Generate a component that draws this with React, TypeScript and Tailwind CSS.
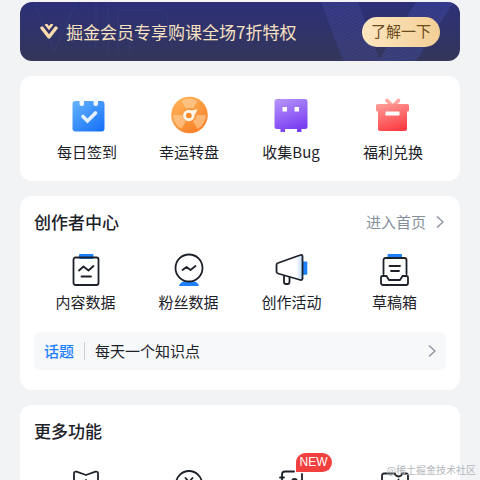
import React from 'react'
import type { ReactNode } from 'react'

const stroke = {
  fill: 'none',
  stroke: '#1d2129',
  strokeWidth: 1.8,
  strokeLinecap: 'round',
  strokeLinejoin: 'round',
} as const

type Item = { id: string; label?: string; icon: ReactNode; badge?: string }

const Svg = ({ children }: { children: ReactNode }) => (
  <svg viewBox="0 0 40 40" className="block size-10 overflow-visible" aria-hidden="true">
    {children}
  </svg>
)

const CalendarIcon = () => (
  <Svg>
    <defs>
      <linearGradient id="calendar" x1="0" y1="0" x2="0.8" y2="1">
        <stop offset="0" stopColor="#66b4ff" />
        <stop offset="1" stopColor="#1a73f8" />
      </linearGradient>
    </defs>
    <rect x="5.5" y="5" width="32" height="30.5" rx="3" fill="url(#calendar)" />
    <rect x="12.5" y="1" width="4.5" height="9" rx="2" fill="#f2f8ff" />
    <rect x="26.5" y="1" width="4.5" height="9" rx="2" fill="#f2f8ff" />
    <path d="M16 20.5l4.5 4.5 8-8" fill="none" stroke="#e4efff" strokeWidth="3.6" strokeLinecap="round" />
  </Svg>
)

const WheelIcon = () => (
  <Svg>
    <defs>
      <linearGradient id="wheel" x1="0" y1="0" x2="0.6" y2="1">
        <stop offset="0" stopColor="#ffb75c" />
        <stop offset="1" stopColor="#fa832a" />
      </linearGradient>
    </defs>
    <circle cx="20.5" cy="19" r="18.3" fill="url(#wheel)" />
    <path d="M20.5 19L12.5 5a16.2 16.2 0 0 1 16 0zM20.5 19H36.7a16.2 16.2 0 0 1-8.1 14zM20.5 19H4.3a16.2 16.2 0 0 0 8.1 14z" fill="#ffd9ab" opacity="0.55" />
    <circle cx="20.5" cy="19" r="7" fill="#fc9238" />
    <circle cx="19.8" cy="19.5" r="4.3" fill="none" stroke="#fff6ea" strokeWidth="3" />
    <path d="M21 15l7.5-2-2.5 6z" fill="#fff6ea" />
    <circle cx="19.8" cy="19.5" r="2.6" fill="#fa8b30" />
  </Svg>
)

const BugIcon = () => (
  <Svg>
    <defs>
      <linearGradient id="bug" x1="0.1" y1="0" x2="0.5" y2="1">
        <stop offset="0" stopColor="#b594fb" />
        <stop offset="1" stopColor="#7a3df2" />
      </linearGradient>
    </defs>
    <path d="M6 3h28a2.5 2.5 0 0 1 2.5 2.5v25A2.5 2.5 0 0 1 34 33h-3.5v3h-4.5v-3H14v3H9.5v-3H6a2.5 2.5 0 0 1-2.5-2.5v-25A2.5 2.5 0 0 1 6 3z" fill="url(#bug)" />
    <path d="M11.5 11H16v4.5h-4.5zM23.5 11H28v4.5h-4.5z" fill="#fff" />
  </Svg>
)

const GiftIcon = () => (
  <Svg>
    <defs>
      <linearGradient id="gift" x1="0.2" y1="0" x2="0.6" y2="1">
        <stop offset="0" stopColor="#ff9a94" />
        <stop offset="1" stopColor="#fc3d44" />
      </linearGradient>
    </defs>
    <path d="M14 4.5l4.5 4.5M25.5 4.5L21 9" stroke="#ffa39c" strokeWidth="3.6" strokeLinecap="round" />
    <path d="M4.5 8h30A1.5 1.5 0 0 1 36 9.5V14a1.5 1.5 0 0 1-1.5 1.5h-.5V33a2 2 0 0 1-2 2H7a2 2 0 0 1-2-2V15.5h-.5A1.5 1.5 0 0 1 3 14V9.500A1.5 1.5 0 0 1 4.5 8z" fill="url(#gift)" />
    <rect x="12.5" y="15.5" width="14" height="4" rx="0.5" fill="#fff" />
  </Svg>
)

const ContentIcon = () => (
  <Svg>
    <rect x="13" y="4" width="14.5" height="5" rx="1" fill="#1e80ff" />
    <g {...stroke}>
      <rect x="7.5" y="7.5" width="25" height="27.5" rx="2" />
      <path d="M13 20.5l4.5-4 5 4 5-4.5M15.5 26.5h9.5" />
    </g>
  </Svg>
)

const FansIcon = () => (
  <Svg>
    <path d="M10 36c.5-3 3-4.5 6-4.5h8c3 0 5.5 1.5 6 4.5z" fill="#1e80ff" />
    <circle cx="20" cy="18" r="13.5" {...stroke} fill="#fff" />
    <path d="M13.5 20l4-3 4 3 5-4" {...stroke} />
  </Svg>
)

const MegaphoneIcon = () => (
  <Svg>
    <defs>
      <linearGradient id="horn" x1="0" y1="0" x2="1" y2="0">
        <stop offset="0.75" stopColor="#fff" />
        <stop offset="1" stopColor="#bcdcff" />
      </linearGradient>
    </defs>
    <path d="M31 11.5h3.5a.8.8 0 0 1 .8.8V24a.8.8 0 0 1-.8.8H31z" fill="#1e80ff" />
    <path d="M12 25.5V32a2 2 0 0 0 2 2h1.5a2 2 0 0 0 2-2V27" {...stroke} />
    <path d="M6 13L28.5 5c1-.4 2 .2 2 1.3V28.5c0 1.2-1 1.8-2 1.5L6 23.5c-1-.3-1.5-1-1.5-2V15c0-1 .5-1.7 1.5-2z" {...stroke} fill="url(#horn)" />
  </Svg>
)

const DraftIcon = () => (
  <Svg>
    <rect x="12.5" y="4" width="14.5" height="5" rx="1" fill="#1e80ff" />
    <g {...stroke}>
      <path d="M8.5 24V10a2 2 0 0 1 2-2h19a2 2 0 0 1 2 2v14" />
      <path d="M14.5 16h10.5M16 21h8" />
      <path d="M7.5 26h4l2.5 4h11l2.5-4h4a1.5 1.5 0 0 1 1.5 1.5V33a2 2 0 0 1-2 2H8a2 2 0 0 1-2-2v-5.5A1.5 1.5 0 0 1 7.5 26z" />
    </g>
  </Svg>
)

const TicketIcon = () => (
  <Svg>
    <path d="M8 33V6.5C8 5 9 4.2 10.5 4.7L20 8l9.5-3.3c1.5-.5 2.5.3 2.5 1.8V33z" {...stroke} />
    <path d="M20 13v9M15.5 17.5h9" {...stroke} />
  </Svg>
)

const CoinIcon = () => (
  <Svg>
    <circle cx="20" cy="17" r="13" {...stroke} />
    <path d="M16.5 11l3.5 4 3.5-4M20 15v9M15.5 17.5h9" {...stroke} />
  </Svg>
)

const SignIcon = () => (
  <Svg>
    <path d="M10 34V7.5a3 3 0 0 1 3-3h9M30 7v27M8 10.5h4" {...stroke} />
    <circle cx="22.5" cy="14.5" r="2.5" {...stroke} />
  </Svg>
)

const CouponIcon = () => (
  <Svg>
    <path d="M7 33V8.5a2 2 0 0 1 2-2h11a3.5 3 0 0 0 7 0h4a2 2 0 0 1 2 2V33z" {...stroke} />
    <path d="M23.5 12.5v3M23.5 20v3" {...stroke} />
  </Svg>
)

const activities: Item[] = [
  { id: 'checkin', label: '每日签到', icon: <CalendarIcon /> },
  { id: 'wheel', label: '幸运转盘', icon: <WheelIcon /> },
  { id: 'bug', label: '收集Bug', icon: <BugIcon /> },
  { id: 'gift', label: '福利兑换', icon: <GiftIcon /> },
]

const creator: Item[] = [
  { id: 'content', label: '内容数据', icon: <ContentIcon /> },
  { id: 'fans', label: '粉丝数据', icon: <FansIcon /> },
  { id: 'events', label: '创作活动', icon: <MegaphoneIcon /> },
  { id: 'drafts', label: '草稿箱', icon: <DraftIcon /> },
]

const more: Item[] = [
  { id: 'ticket', icon: <TicketIcon /> },
  { id: 'coin', icon: <CoinIcon /> },
  { id: 'sign', icon: <SignIcon />, badge: 'NEW' },
  { id: 'coupon', icon: <CouponIcon /> },
]

const Chevron = () => (
  <svg viewBox="0 0 8 14" className="h-3.5 w-2" fill="none" stroke="#86909c" strokeWidth="1.3" aria-hidden="true">
    <path d="M1 1.5l6 5.5-6 5.5" />
  </svg>
)

function IconGrid({ items, className = 'gap-0.5' }: { items: Item[]; className?: string }) {
  return (
    <div className="grid grid-cols-4">
      {items.map((item) => (
        <button key={item.id} type="button" className={`relative flex flex-col items-center ${className}`}>
          {item.icon}
          {item.label && <span className="text-[15px] leading-5">{item.label}</span>}
          {item.badge && (
            <span className="absolute -top-3.5 left-1/2 ml-1 rounded-full rounded-bl-none bg-[#f2403f] px-1 font-['Liberation_Sans',sans-serif] text-xs leading-[19px] text-white">
              {item.badge}
            </span>
          )}
        </button>
      ))}
    </div>
  )
}

export default function App() {
  return (
    <div className="relative h-screen overflow-hidden bg-[#f1f3f5] px-5 pt-0.5 font-['Noto_Sans_CJK_SC',sans-serif] text-[#1d2129]">
      <main className="flex flex-col gap-[15px]">
        <section className="relative flex h-[59px] items-center overflow-hidden rounded-xl bg-linear-to-b from-[#2c2f78] to-[#34365a] px-5">
          {/* Faint VIP lettering and hatched stripes behind the text */}
          <svg className="absolute inset-0 size-full" viewBox="0 0 440 59" preserveAspectRatio="none" aria-hidden="true">
            <defs>
              <pattern id="hatch" width="3" height="3" patternUnits="userSpaceOnUse" patternTransform="rotate(-28)">
                <path d="M0 1h3" stroke="#6a70dc" strokeWidth="0.7" opacity="0.35" />
              </pattern>
            </defs>
            <path d="M14 0l20 50 22-50M76 0v50M88 0v50M98 50V8h42c10 0 10 26 0 26h-30v16" fill="none" stroke="#5a60b8" opacity="0.18" />
            <path d="M301 0h37l22 59h-37z" fill="#3a3f8c" opacity="0.3" />
            <path d="M301 0h37l22 59h-37z" fill="url(#hatch)" />
            <path d="M396 0h38l-38 59h-38z" fill="#3d44a0" opacity="0.3" />
            <path d="M396 0h38l-38 59h-38z" fill="url(#hatch)" />
          </svg>
          <svg viewBox="0 0 18 16" className="relative h-4 w-[18px]" fill="none" stroke="#fbdcae" aria-hidden="true">
            <path d="M2 4l7 9 7-9" strokeWidth="3.4" strokeLinecap="round" strokeLinejoin="round" />
            <path d="M5.7 0L9 4.2 12.300 0" strokeWidth="2.6" />
          </svg>
          <p className="relative ml-2 flex-1 text-[17px] leading-6 text-[#f8e0c0]">掘金会员专享购课全场7折特权</p>
          <button type="button" className="relative h-[30px] rounded-full bg-linear-to-r from-[#fde6c0] to-[#f3cf96] px-[9px] text-[15px] text-[#6b4a1c]">
            了解一下
          </button>
        </section>

        <section className="rounded-xl bg-white px-4 pt-5 pb-[19px]">
          <IconGrid items={activities} className="gap-1.5" />
        </section>

        <section className="rounded-xl bg-white px-3.5 pt-3.5 pb-5">
          <div className="flex items-center justify-between">
            <h2 className="text-[17px] leading-6 font-medium">创作者中心</h2>
            <a href="#creator" className="flex items-center gap-2.5 pr-0.5 text-[15px] leading-6 text-[#86909c]">
              进入首页
              <Chevron />
            </a>
          </div>
          <div className="mt-4">
            <IconGrid items={creator} />
          </div>
          <a href="#topic" className="mt-5 flex h-[38px] items-center rounded-md bg-[#f7f8fa] px-2.5 text-[15px] leading-5">
            <span className="font-medium text-[#1e80ff]">话题</span>
            <span className="mx-2.5 h-[18px] w-px bg-[#c9cdd4]" />
            <span className="flex-1">每天一个知识点</span>
            <Chevron />
          </a>
        </section>

        <section className="rounded-xl bg-white px-3.5 pt-3.5 pb-5">
          <h2 className="text-[17px] leading-6 font-medium">更多功能</h2>
          <div className="mt-6">
            <IconGrid items={more} />
          </div>
        </section>
      </main>
      <p className="absolute right-1 bottom-0.5 text-[10px] leading-4 text-[#b5b8bd]">@稀土掘金技术社区</p>
    </div>
  )
}
